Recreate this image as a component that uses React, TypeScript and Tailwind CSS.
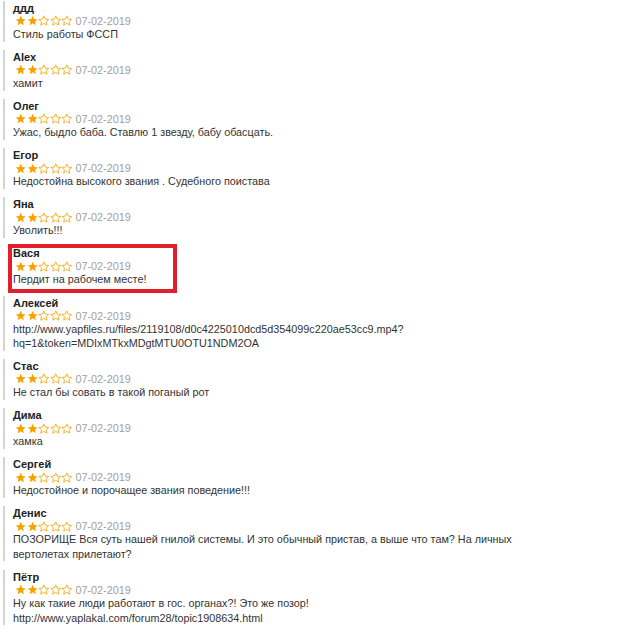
import React from "react";

type Review = {
  name: string;
  lines: string[];
  marked?: boolean;
};

const reviews: Review[] = [
  { name: "ддд", lines: ["Стиль работы ФССП"] },
  { name: "Alex", lines: ["хамит"] },
  { name: "Олег", lines: ["Ужас, быдло баба. Ставлю 1 звезду, бабу обасцать."] },
  { name: "Егор", lines: ["Недостойна высокого звания . Судебного поистава"] },
  { name: "Яна", lines: ["Уволить!!!"] },
  { name: "Вася", lines: ["Пердит на рабочем месте!"], marked: true },
  {
    name: "Алексей",
    lines: [
      "http://www.yapfiles.ru/files/2119108/d0c4225010dcd5d354099c220ae53cc9.mp4?",
      "hq=1&token=MDIxMTkxMDgtMTU0OTU1NDM2OA",
    ],
  },
  { name: "Стас", lines: ["Не стал бы совать в такой поганый рот"] },
  { name: "Дима", lines: ["хамка"] },
  { name: "Сергей", lines: ["Недостойное и порочащее звания поведение!!!"] },
  {
    name: "Денис",
    lines: [
      "ПОЗОРИЩЕ Вся суть нашей гнилой системы. И это обычный пристав, а выше что там? На личных вертолетах прилетают?",
    ],
  },
  {
    name: "Пётр",
    lines: [
      "Ну как такие люди работают в гос. органах?! Это же позор!",
      "http://www.yaplakal.com/forum28/topic1908634.html",
    ],
  },
];

const STAR =
  "M12 1.8l3 6.7 7.3.7-5.5 4.8 1.6 7.2-6.4-3.8-6.4 3.8 1.6-7.2L1.7 9.2l7.3-.7z";

function Stars({ value }: { value: number }) {
  return (
    <div className="flex items-center ml-[2px]">
      {[0, 1, 2, 3, 4].map((i) => (
        <svg key={i} viewBox="0 0 24 24" className="w-[11.5px] h-[11.5px]">
          {i < value ? (
            <path d={STAR} fill="#f5a300" />
          ) : (
            <path d={STAR} fill="none" stroke="#f5a300" strokeWidth="1.7" strokeLinejoin="round" />
          )}
        </svg>
      ))}
    </div>
  );
}

function ReviewItem({ review }: { review: Review }) {
  return (
    <div
      className={`relative border-l-2 pl-2 mb-[8.6px] ${
        review.marked ? "border-transparent" : "border-[#d4d4d4]"
      }`}
    >
      <div className="text-[11px] leading-[14px] font-bold text-[#222]">{review.name}</div>
      <div className="flex items-center h-[12px]">
        <Stars value={2} />
        <span className="ml-[3px] text-[10.8px] leading-[12px] text-[#a0a0a0]">07-02-2019</span>
      </div>
      <div className="text-[10.8px] leading-[14.5px] text-[#333]">
        {review.lines.map((l, i) => (
          <div key={i}>{l}</div>
        ))}
      </div>
      {review.marked && (
        <div className="absolute left-[3px] top-[-2px] w-[169px] h-[49px] border-4 border-[#e1202b]"></div>
      )}
    </div>
  );
}

export default function App() {
  return (
    <div className="min-h-screen bg-white font-['Liberation_Sans',Arial,sans-serif] pl-[3px] pt-[1px]">
      <div className="w-[540px]">
        {reviews.map((r, i) => (
          <ReviewItem key={i} review={r} />
        ))}
      </div>
    </div>
  );
}
